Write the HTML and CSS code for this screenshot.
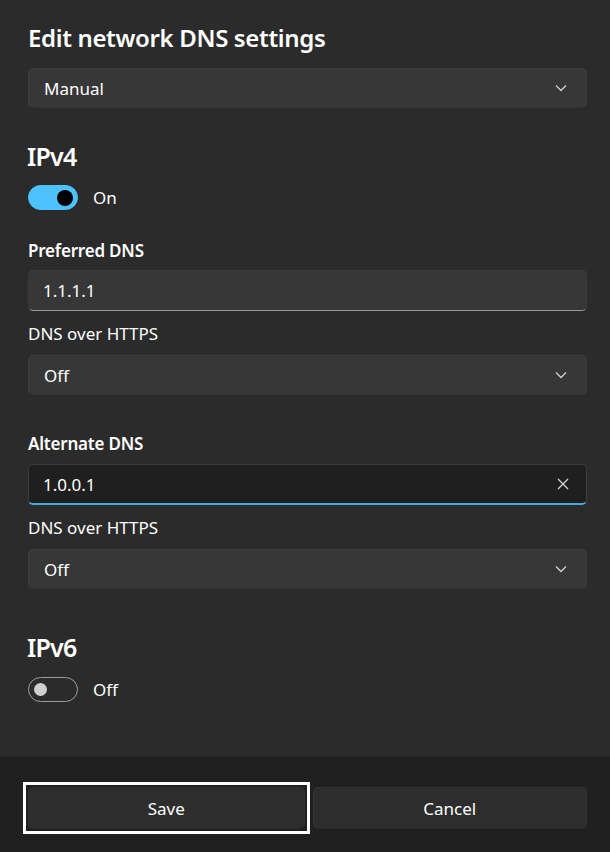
FILE: index.html
```html
<!DOCTYPE html>
<html lang="en">
  <head>
    <meta charset="UTF-8" />
    <meta name="viewport" content="width=device-width, initial-scale=1.0" />
    <title>Edit network DNS settings</title>
    <link rel="stylesheet" href="styles.css">
  </head>
  <body>
    <div class="dialog">
      <div class="content">
        <h1 class="title">Edit network DNS settings</h1>
        <div class="select select-mode">
          <span>Manual</span>
          <svg class="chevron" width="12" height="8" viewBox="0 0 12 8"><polyline points="1,1.5 6,6.5 11,1.5" /></svg>
        </div>

        <h2 class="proto">IPv4</h2>
        <div class="toggle-row">
          <span class="toggle on"><span class="knob"></span></span>
          <span>On</span>
        </div>

        <div class="field-label first">Preferred DNS</div>
        <div class="input">1.1.1.1</div>
        <div class="sub-label">DNS over HTTPS</div>
        <div class="select">
          <span>Off</span>
          <svg class="chevron" width="12" height="8" viewBox="0 0 12 8"><polyline points="1,1.5 6,6.5 11,1.5" /></svg>
        </div>

        <div class="field-label second">Alternate DNS</div>
        <div class="input focused">
          <span>1.0.0.1</span>
          <svg class="clear" width="12" height="12" viewBox="0 0 12 12"><path d="M1 1L11 11M11 1L1 11" /></svg>
        </div>
        <div class="sub-label">DNS over HTTPS</div>
        <div class="select">
          <span>Off</span>
          <svg class="chevron" width="12" height="8" viewBox="0 0 12 8"><polyline points="1,1.5 6,6.5 11,1.5" /></svg>
        </div>

        <h2 class="proto proto-v6">IPv6</h2>
        <div class="toggle-row toggle-v6">
          <span class="toggle"><span class="knob"></span></span>
          <span>Off</span>
        </div>
      </div>

      <div class="footer">
        <div class="focus-ring">
          <button class="btn">Save</button>
        </div>
        <button class="btn">Cancel</button>
      </div>
    </div>
  </body>
</html>
```

FILE: styles.css
```css
body {
  margin: 0;
  background-color: #2b2b2b;
  color: #ffffff;
  font-family: "Noto Sans", "Open Sans", sans-serif;
  font-size: 17px;
}
.dialog {
  display: flex;
  flex-direction: column;
  height: 852px;
}
.content {
  flex: 1;
  display: flex;
  flex-direction: column;
  padding: 22px 23px 0 28px;
}
.title {
  margin: 0;
  font-size: 24px;
  font-weight: 600;
  line-height: 32px;
  letter-spacing: -0.35px;
}
.select {
  display: flex;
  align-items: center;
  justify-content: space-between;
  height: 40px;
  padding: 0 19px 0 15px;
  box-sizing: border-box;
  background-color: #373737;
  border: 1px solid #3d3d3d;
  border-bottom-color: #333333;
  border-radius: 5px;
  margin-top: 9px;
}
.select-mode {
  margin-top: 14px;
}
.chevron {
  fill: none;
  stroke: #d0d0d0;
  stroke-width: 1.3;
}
.proto {
  margin: 31px 0 0 -1px;
  font-size: 25px;
  font-weight: 600;
  line-height: 34px;
  letter-spacing: -0.8px;
}
.proto-v6 {
  margin-top: 41px;
}
.toggle-row {
  display: flex;
  align-items: center;
  gap: 15px;
  margin-top: 12px;
  height: 25px;
}
.toggle-v6 {
  margin-top: 13px;
}
.toggle {
  display: flex;
  align-items: center;
  width: 50px;
  height: 25px;
  box-sizing: border-box;
  border: 1px solid #9c9c9c;
  border-radius: 13px;
  padding: 0 5px;
}
.knob {
  width: 13px;
  height: 13px;
  border-radius: 50%;
  background-color: #cfcfcf;
}
.toggle.on {
  background-color: #4cc2ff;
  border-color: #4cc2ff;
  justify-content: flex-end;
  padding: 0 4px;
}
.toggle.on .knob {
  width: 16px;
  height: 16px;
  background-color: #000000;
}
.field-label {
  font-weight: 600;
  line-height: 24px;
  letter-spacing: -0.2px;
}
.field-label.first {
  margin-top: 29px;
}
.field-label.second {
  margin-top: 37px;
}
.sub-label {
  line-height: 24px;
  margin-top: 11px;
}
.input {
  display: flex;
  align-items: center;
  justify-content: space-between;
  height: 41px;
  box-sizing: border-box;
  padding: 0 17px 0 14px;
  margin-top: 7px;
  background-color: #373737;
  border: 1px solid #3a3a3a;
  border-bottom: 1px solid #9a9a9a;
  border-radius: 5px;
}
.input.focused {
  margin-top: 8px;
  background-color: #1f1f1f;
  border-color: #3c3c3c;
  border-bottom: 2px solid #4aa8e0;
}
.clear {
  fill: none;
  stroke: #d6d6d6;
  stroke-width: 1.3;
}
.footer {
  display: grid;
  grid-template-columns: 1fr 1fr;
  align-items: start;
  gap: 10px;
  height: 95px;
  box-sizing: border-box;
  padding: 29px 23px 0 28px;
  background-color: #202020;
  border-top: 1px solid #1b1b1b;
}
.btn {
  height: 42px;
  font-family: inherit;
  font-size: 17px;
  color: #ffffff;
  background-color: #2d2d2d;
  border: 1px solid #333333;
  border-bottom-color: #2a2a2a;
  border-radius: 5px;
}
/* keyboard focus frame around the default button */
.focus-ring {
  display: flex;
  flex-direction: column;
  margin: -5px -7px -5px -5px;
  padding: 2px;
  border: 3px solid #ffffff;
}
```
